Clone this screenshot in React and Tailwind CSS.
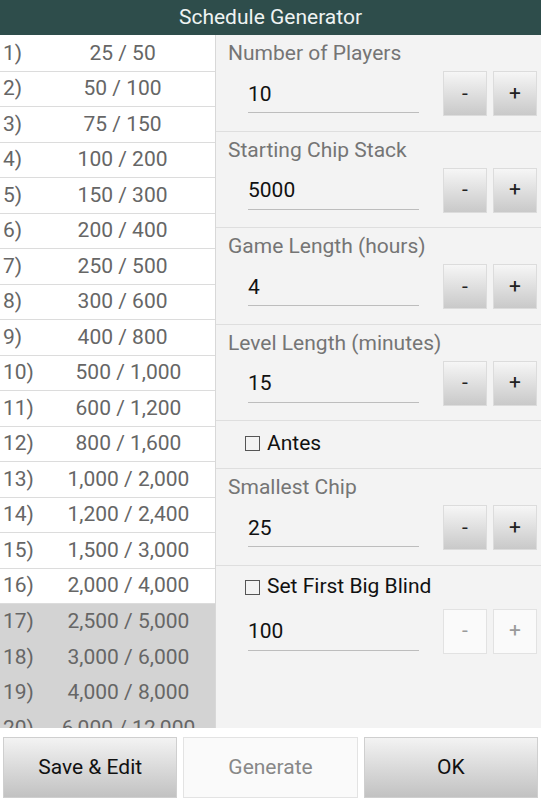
import { useState } from 'react';

const levels = [
    ['25', '50'], ['50', '100'], ['75', '150'], ['100', '200'], ['150', '300'],
    ['200', '400'], ['250', '500'], ['300', '600'], ['400', '800'], ['500', '1,000'],
    ['600', '1,200'], ['800', '1,600'], ['1,000', '2,000'], ['1,200', '2,400'], ['1,500', '3,000'],
    ['2,000', '4,000'], ['2,500', '5,000'], ['3,000', '6,000'], ['4,000', '8,000'], ['6,000', '12,000'],
];

const StepButton = ({ label, disabled, onClick }) => (
    <button
        onClick={onClick}
        className={
            disabled
                ? 'w-[44px] h-[45px] border border-[#e2e2e2] bg-[#fafafa] text-[#9a9a9a] text-[21px]'
                : 'w-[44px] h-[45px] border border-[#dcdcdc] bg-gradient-to-b from-[#f6f6f6] to-[#c9c9c9] text-[#222] text-[21px]'
        }
    >
        {label}
    </button>
);

const NumberField = ({ label, value, setValue, step }) => (
    <div className="h-[96.5px] border-b border-[#dedede] pl-[12px] pr-[4px] flex flex-col">
        <div className="h-[36px] pt-[3px] text-[21px] text-[#757575]">{label}</div>
        <div className="flex items-center">
            <div className="ml-[20px] w-[171px] border-b border-[#bdbdbd] text-[21px] text-[#111] pt-[5px] pb-[2px]">{value}</div>
            <div className="ml-auto flex gap-[6px]">
                <StepButton label="-" onClick={() => setValue(Math.max(0, value - step))} />
                <StepButton label="+" onClick={() => setValue(value + step)} />
            </div>
        </div>
    </div>
);

const App = () => {
    const [players, setPlayers] = useState(10);
    const [stack, setStack] = useState(5000);
    const [hours, setHours] = useState(4);
    const [minutes, setMinutes] = useState(15);
    const [chip, setChip] = useState(25);
    const [bigBlind] = useState(100);

    return (
        <div className="w-[541px] h-[800px] flex flex-col bg-white overflow-hidden" style={{ fontFamily: 'Roboto, "Liberation Sans", sans-serif' }}>
            <div className="h-[35px] bg-[#2e4d4b] text-[#eef3f2] text-[21px] flex items-center justify-center">Schedule Generator</div>

            <div className="h-[693px] flex">
                {/* blind levels */}
                <div className="w-[216px] border-r border-[#d8d8d8] overflow-hidden pt-[1px]">
                    {levels.map(([sb, bb], i) => (
                        <div
                            key={i}
                            className={
                                i < 16
                                    ? 'h-[35.5px] flex items-center border-b border-[#dcdcdc] text-[21px] text-[#666]'
                                    : 'h-[35.5px] flex items-center bg-[#d3d3d3] text-[21px] text-[#666]'
                            }
                        >
                            <span className="pl-[3px] pr-[9px] whitespace-nowrap">{i + 1})</span>
                            <span className="flex-1 pr-[1px] text-center whitespace-nowrap">{sb} / {bb}</span>
                        </div>
                    ))}
                </div>

                {/* settings */}
                <div className="flex-1 bg-[#f3f3f3]">
                    <NumberField label="Number of Players" value={players} setValue={setPlayers} step={1} />
                    <NumberField label="Starting Chip Stack" value={stack} setValue={setStack} step={500} />
                    <NumberField label="Game Length (hours)" value={hours} setValue={setHours} step={1} />
                    <NumberField label="Level Length (minutes)" value={minutes} setValue={setMinutes} step={5} />
                    <div className="h-[48px] border-b border-[#dedede] flex items-center pl-[29px] pb-[2px] text-[21px] text-[#111]">
                        <span className="w-[15px] h-[15px] border border-[#555] mr-[7px]" />
                        Antes
                    </div>
                    <NumberField label="Smallest Chip" value={chip} setValue={setChip} step={25} />
                    <div className="pl-[12px] pr-[4px] flex flex-col">
                        <div className="flex items-center h-[43px] pl-[17px] text-[21px] text-[#111]">
                            <span className="w-[15px] h-[15px] border border-[#555] mr-[7px]" />
                            Set First Big Blind
                        </div>
                        <div className="flex items-center">
                            <div className="ml-[20px] w-[171px] border-b border-[#bdbdbd] text-[21px] text-[#111] pt-[5px] pb-[2px]">{bigBlind}</div>
                            <div className="ml-auto flex gap-[6px]">
                                <StepButton label="-" disabled />
                                <StepButton label="+" disabled />
                            </div>
                        </div>
                    </div>
                </div>
            </div>

            <div className="flex-1 flex gap-[6px] px-[3px] pt-[9px] pb-[2px] bg-white">
                <button className="flex-1 border border-[#cfcfcf] bg-gradient-to-b from-[#f3f3f3] to-[#c2c2c2] text-[21px] text-[#111]">Save &amp; Edit</button>
                <button className="flex-1 border border-[#e3e3e3] bg-[#fafafa] text-[21px] text-[#888]">Generate</button>
                <button className="flex-1 border border-[#cfcfcf] bg-gradient-to-b from-[#f3f3f3] to-[#c2c2c2] text-[21px] text-[#111]">OK</button>
            </div>
        </div>
    );
};

export default App;
